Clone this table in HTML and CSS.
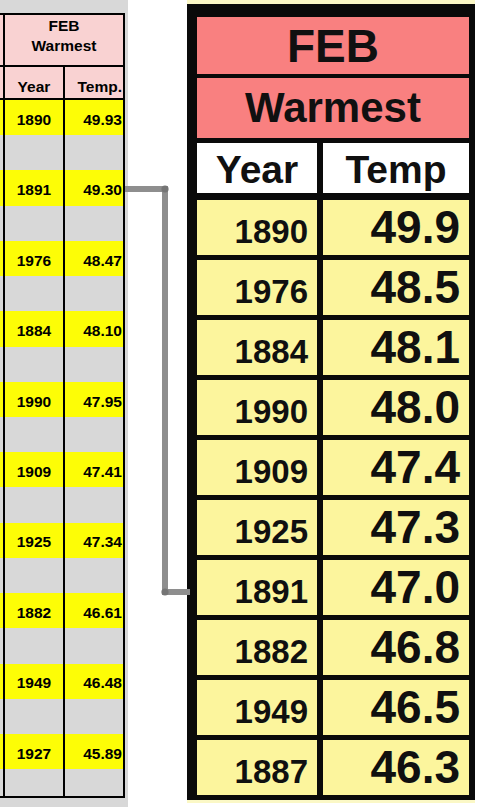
FILE: index.html
```html
<!DOCTYPE html>
<html lang="en">
<head>
<meta charset="utf-8">
<title>FEB Warmest</title>
<link rel="stylesheet" href="styles.css">
</head>
<body>
<div class="page">
  <section class="left">
    <div class="lhead">
      <div class="edge"></div>
      <div class="ltitle">FEB<br>Warmest</div>
    </div>
    <div class="lsub">
      <div class="edge"></div>
      <div class="c1">Year</div>
      <div class="c2">Temp.</div>
    </div>
    <div class="lbody">
      <div class="lrow hi"><div class="edge"></div><div class="c1">1890</div><div class="c2">49.93</div></div>
      <div class="lrow"><div class="edge"></div><div class="c1"></div><div class="c2"></div></div>
      <div class="lrow hi"><div class="edge"></div><div class="c1">1891</div><div class="c2">49.30</div></div>
      <div class="lrow"><div class="edge"></div><div class="c1"></div><div class="c2"></div></div>
      <div class="lrow hi"><div class="edge"></div><div class="c1">1976</div><div class="c2">48.47</div></div>
      <div class="lrow"><div class="edge"></div><div class="c1"></div><div class="c2"></div></div>
      <div class="lrow hi"><div class="edge"></div><div class="c1">1884</div><div class="c2">48.10</div></div>
      <div class="lrow"><div class="edge"></div><div class="c1"></div><div class="c2"></div></div>
      <div class="lrow hi"><div class="edge"></div><div class="c1">1990</div><div class="c2">47.95</div></div>
      <div class="lrow"><div class="edge"></div><div class="c1"></div><div class="c2"></div></div>
      <div class="lrow hi"><div class="edge"></div><div class="c1">1909</div><div class="c2">47.41</div></div>
      <div class="lrow"><div class="edge"></div><div class="c1"></div><div class="c2"></div></div>
      <div class="lrow hi"><div class="edge"></div><div class="c1">1925</div><div class="c2">47.34</div></div>
      <div class="lrow"><div class="edge"></div><div class="c1"></div><div class="c2"></div></div>
      <div class="lrow hi"><div class="edge"></div><div class="c1">1882</div><div class="c2">46.61</div></div>
      <div class="lrow"><div class="edge"></div><div class="c1"></div><div class="c2"></div></div>
      <div class="lrow hi"><div class="edge"></div><div class="c1">1949</div><div class="c2">46.48</div></div>
      <div class="lrow"><div class="edge"></div><div class="c1"></div><div class="c2"></div></div>
      <div class="lrow hi"><div class="edge"></div><div class="c1">1927</div><div class="c2">45.89</div></div>
      <div class="lrow"><div class="edge"></div><div class="c1"></div><div class="c2"></div></div>
    </div>
  </section>

  <section class="right">
    <div class="rt">
      <div class="rh feb">FEB</div>
      <div class="rh warm">Warmest</div>
      <div class="rsub"><div class="ry">Year</div><div class="rtp">Temp</div></div>
      <div class="rrow"><div class="ry">1890</div><div class="rtp">49.9</div></div>
      <div class="rrow"><div class="ry">1976</div><div class="rtp">48.5</div></div>
      <div class="rrow"><div class="ry">1884</div><div class="rtp">48.1</div></div>
      <div class="rrow"><div class="ry">1990</div><div class="rtp">48.0</div></div>
      <div class="rrow"><div class="ry">1909</div><div class="rtp">47.4</div></div>
      <div class="rrow"><div class="ry">1925</div><div class="rtp">47.3</div></div>
      <div class="rrow"><div class="ry">1891</div><div class="rtp">47.0</div></div>
      <div class="rrow"><div class="ry">1882</div><div class="rtp">46.8</div></div>
      <div class="rrow"><div class="ry">1949</div><div class="rtp">46.5</div></div>
      <div class="rrow"><div class="ry">1887</div><div class="rtp">46.3</div></div>
    </div>
  </section>

  <svg class="connector" width="480" height="807" viewBox="0 0 480 807" aria-hidden="true">
    <path d="M125 189 H165 V592 H190" fill="none" stroke="#8e8e8e" stroke-width="6"/>
    <circle cx="165" cy="189" r="3.6" fill="#757575"/>
    <circle cx="165" cy="592" r="3.6" fill="#757575"/>
  </svg>
</div>
</body>
</html>
```

FILE: styles.css
```css
* { box-sizing: border-box; }

html, body {
  margin: 0;
  padding: 0;
  background: #ffffff;
}

body {
  font-family: "Liberation Sans", Arial, sans-serif;
  font-weight: bold;
  color: #000;
}

.page {
  position: relative;
  display: flex;
  align-items: flex-start;
  width: 480px;
  height: 807px;
  overflow: hidden;
}

/* ---------- left spreadsheet ---------- */
.left {
  flex: none;
  width: 128px;
  height: 807px;
  background: #d8d8d8;
  padding-top: 13px;
}

.edge {
  flex: none;
  width: 3px;
}

.lhead {
  display: flex;
  width: 125px;
  height: 54px;
  background: #f9d2d2;
  border-top: 2px solid #000;
  border-bottom: 2px solid #000;
}

.ltitle {
  width: 122px;
  border-left: 2px solid #000;
  border-right: 2px solid #000;
  text-align: center;
  font-size: 15.5px;
  line-height: 20px;
  padding-top: 1px;
}

.lsub {
  display: flex;
  width: 125px;
  height: 33px;
  background: #f9d2d2;
  border-bottom: 2px solid #000;
  font-size: 15.5px;
  line-height: 1;
}

.lsub .c1,
.lsub .c2 {
  display: flex;
  align-items: flex-end;
  padding-bottom: 4px;
}

.c1 {
  flex: none;
  width: 60px;
  border-left: 2px solid #000;
  justify-content: center;
}

.c2 {
  flex: none;
  width: 62px;
  border-left: 2px solid #000;
  border-right: 2px solid #000;
  justify-content: flex-end;
  padding-right: 1px;
}

.lbody {
  width: 125px;
  height: 698px;
  overflow: hidden;
  border-bottom: 2px solid #000;
}

.lrow {
  display: flex;
  height: 35.22px;
  font-size: 15.5px;
  line-height: 1;
}

.lrow.hi {
  background: #fdfd06;
}

.lrow .c1,
.lrow .c2 {
  display: flex;
  align-items: center;
  padding-top: 4px;
}

/* ---------- right summary table ---------- */
.right {
  flex: none;
  margin-left: 59px;
  width: 288px;
  background: #fbf8c6;
  padding: 4px 0 3px;
}

.rt {
  display: flex;
  flex-direction: column;
  background: #0a0a0a;
  padding: 13px 6px 5px 10px;
  color: #101010;
}

.rh {
  display: flex;
  justify-content: center;
  align-items: flex-end;
  background: #f98080;
  line-height: 1;
}

.feb {
  height: 57px;
  font-size: 46px;
  padding-bottom: 5px;
  margin-bottom: 4px;
}

.warm {
  height: 60px;
  font-size: 42px;
  padding-bottom: 9px;
  margin-bottom: 5px;
}

.rsub {
  display: flex;
  gap: 6px;
  height: 50px;
  margin-bottom: 7px;
}

.rsub > div {
  display: flex;
  justify-content: center;
  align-items: flex-end;
  background: #ffffff;
  font-size: 39px;
  line-height: 1;
  padding-bottom: 4px;
}

.ry { flex: none; width: 120px; }
.rtp { flex: none; width: 146px; }

.rrow {
  display: flex;
  gap: 6px;
  height: 55px;
}

.rrow + .rrow {
  margin-top: 5px;
}

.rrow > div {
  display: flex;
  justify-content: flex-end;
  align-items: flex-end;
  background: #fcf59d;
  line-height: 1;
  padding-right: 9px;
}

.rrow .ry {
  font-size: 33px;
  padding-bottom: 7px;
}

.rrow .rtp {
  font-size: 46px;
  padding-bottom: 5px;
}

/* ---------- connector overlay ---------- */
.connector {
  position: absolute;
  left: 0;
  top: 0;
  pointer-events: none;
}
```
